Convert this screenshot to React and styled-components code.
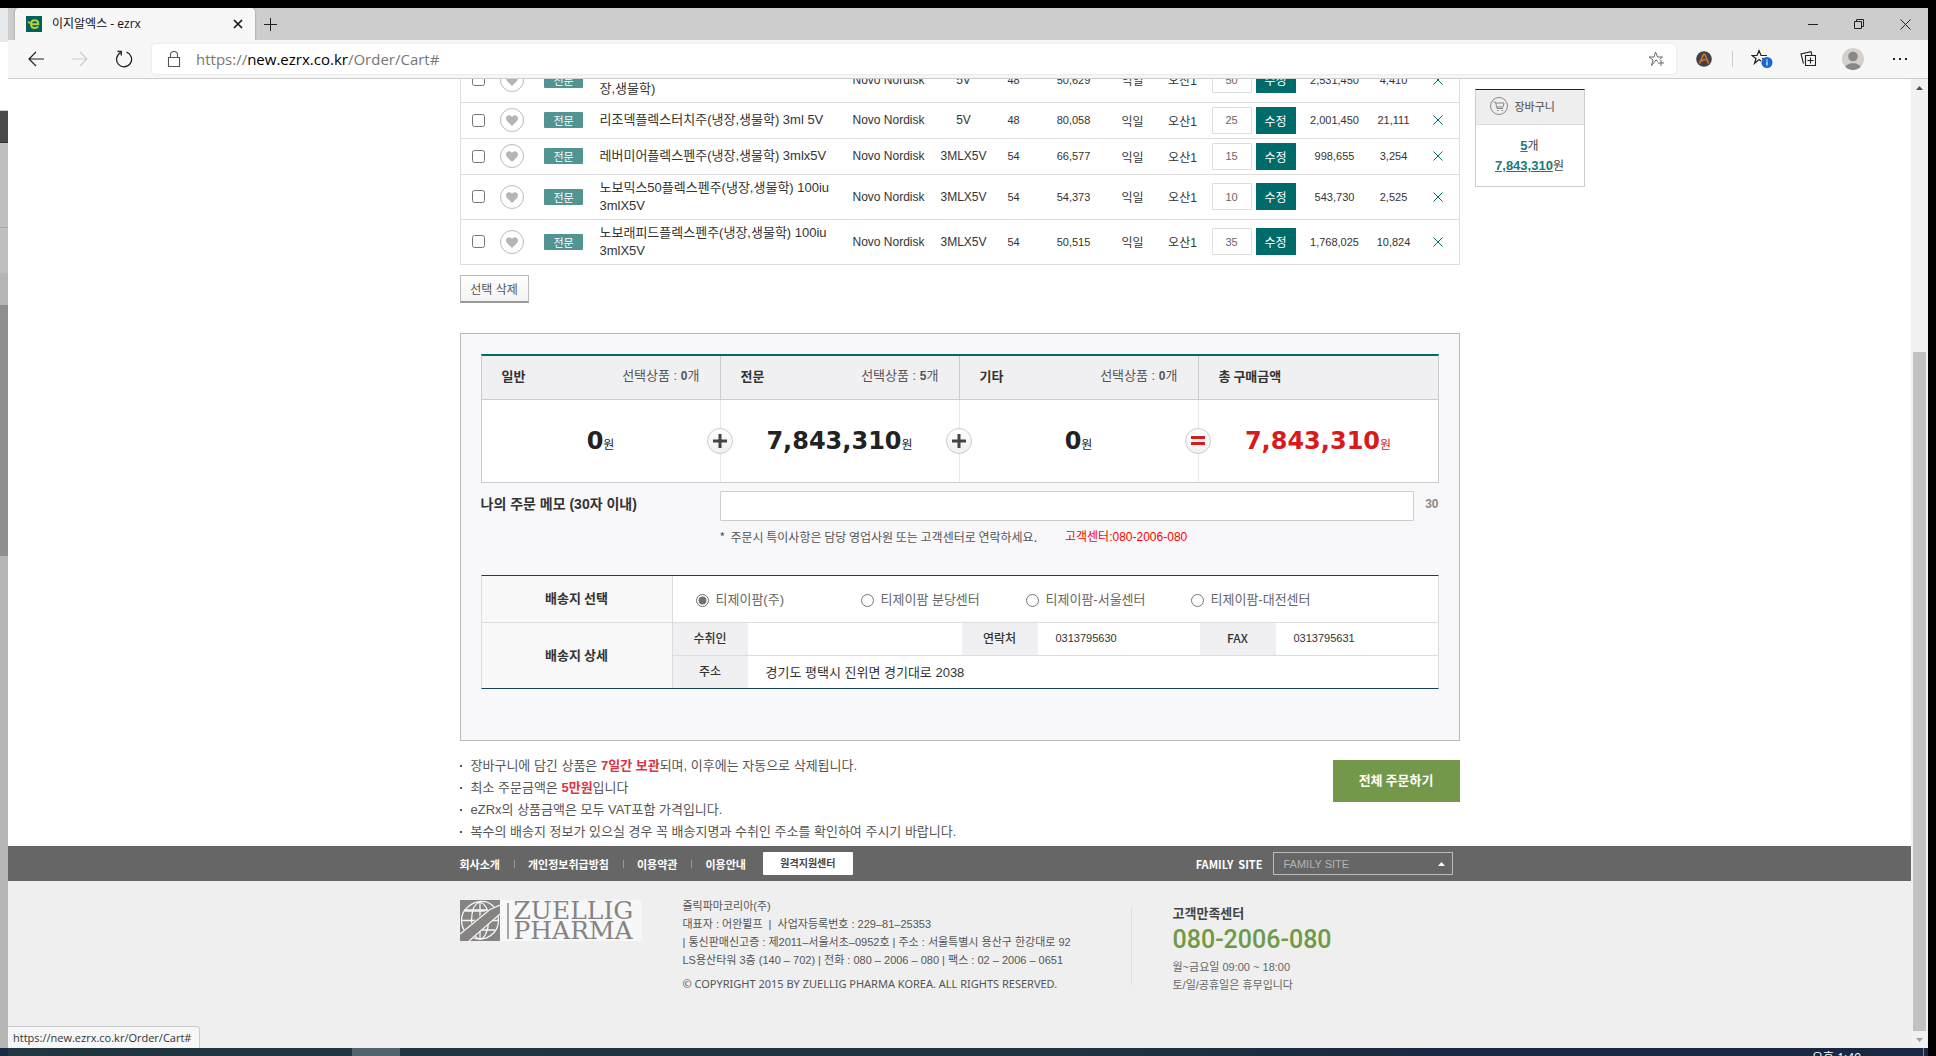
import React from 'react';
import styled, { createGlobalStyle, css } from 'styled-components';

const TEAL = '#006b6b';
const UI_FONT = '"Liberation Sans", "Noto Sans CJK KR", sans-serif';
const KR_FONT = '"Noto Sans CJK KR", "Liberation Sans", sans-serif';
const CHROME_FONT = '"Open Sans", "Noto Sans CJK KR", sans-serif';

const Global = createGlobalStyle`
  *, *::before, *::after { box-sizing: border-box; }
  body { margin: 0; background: #000; font-family: ${UI_FONT}; font-size: 12px; color: #333; }
  button, input, select { font-family: inherit; margin: 0; }
  table { border-collapse: separate; border-spacing: 0; }
  ul { list-style: none; margin: 0; padding: 0; }
  p { margin: 0; }
  a { color: inherit; text-decoration: none; }
  svg { display: block; flex: none; }
`;

/* ---------- desktop ---------- */

const Desktop = styled.div`
  display: flex;
  flex-direction: column;
  height: 100vh;
  padding-top: 8px;
  overflow: hidden;
`;

const Workspace = styled.div`
  display: flex;
  flex: 1;
  min-height: 0;
  padding-right: 8px;
`;

const BackWindow = styled.div`
  display: flex;
  flex-direction: column;
  width: 8px;
  flex: none;
`;

const Strip = styled.div`
  height: ${(p) => (p.$h ? `${p.$h}px` : 'auto')};
  flex: ${(p) => (p.$h ? 'none' : '1')};
  background: ${(p) => p.$bg};
`;

const Taskbar = styled.div`
  display: flex;
  height: 8px;
  flex: none;
  overflow: hidden;
  background: linear-gradient(90deg, #1c2848 0 8px, #21363f 8px, #20333f 55%, #1a2742 75%);
  border-right: 8px solid #000;
`;

const TaskButton = styled.div`
  width: 48px;
  margin-left: 352px;
  background: #52636b;
`;

const Clock = styled.time`
  margin-left: auto;
  margin-right: 4px;
  padding: 3px 62px 0 0;
  border-right: 1px solid #7b8494;
  font: 12px/14px ${CHROME_FONT};
  color: #fff;
`;

/* ---------- browser chrome ---------- */

const Browser = styled.div`
  position: relative;
  display: flex;
  flex-direction: column;
  flex: 1;
  min-width: 0;
  background: #fff;
`;

const TabStrip = styled.div`
  display: flex;
  align-items: center;
  height: 32px;
  flex: none;
  padding-left: 7px;
  background: #cdcdcd;
`;

const Tab = styled.div`
  display: flex;
  align-items: center;
  gap: 10px;
  width: 240px;
  height: 32px;
  padding: 0 12px 0 11px;
  border-radius: 4px 4px 0 0;
  background: #f7f7f7;
  box-shadow: 0 0 2px rgba(0, 0, 0, 0.4);
  font: 12px/16px ${CHROME_FONT};
  color: #111;
`;

const TabTitle = styled.span`
  flex: 1;
`;

const IconButton = styled.button`
  display: flex;
  align-items: center;
  justify-content: center;
  width: ${(p) => p.$w || 24}px;
  height: 24px;
  padding: 0;
  border: 0;
  background: none;
  color: ${(p) => p.$color || '#222'};
`;

const WindowButtons = styled.div`
  display: flex;
  margin-left: auto;
`;

const Toolbar = styled.div`
  position: relative;
  display: flex;
  align-items: center;
  height: 39px;
  flex: none;
  padding: 0 5px 1px 7px;
  background: #f7f7f7;
  border-bottom: 1px solid #ccc;
`;

const NavButtons = styled.div`
  display: flex;
  gap: 2px;
  margin-right: 7px;
`;

const AddressBar = styled.label`
  display: flex;
  align-items: center;
  flex: 1;
  height: 30px;
  margin-right: 4px;
  padding: 0 8px 0 14px;
  border-radius: 4px;
  background: #fff;
  box-shadow: 0 0 3px rgba(0, 0, 0, 0.1);
  color: #555;
`;

const Url = styled.span`
  flex: 1;
  margin-left: 14px;
  font: 15px/20px ${CHROME_FONT};
  color: #777;
  b { font-weight: 400; color: #000; }
`;

const ToolDivider = styled.span`
  width: 1px;
  height: 16px;
  margin: 0 4px;
  background: #ccc;
`;

const StatusBubble = styled.div`
  position: absolute;
  left: 0;
  bottom: 0;
  height: 22px;
  padding: 0 8px 0 5px;
  border: 1px solid #ccc;
  border-width: 1px 1px 0 0;
  border-radius: 0 4px 0 0;
  background: #f7f7f7;
  font: 11px/22px ${CHROME_FONT};
  color: #333;
`;

const Viewport = styled.div`
  display: flex;
  flex: 1;
  min-height: 0;
`;

const Scrollbar = styled.div`
  display: flex;
  flex-direction: column;
  width: 17px;
  flex: none;
  padding: 0 2px;
  background: #f1f1f1;
`;

const ScrollArrow = styled.div`
  display: flex;
  align-items: center;
  justify-content: center;
  height: 17px;
  color: ${(p) => p.$color};
`;

const Track = styled.div`
  display: grid;
  grid-template-rows: 256fr 679fr;
  flex: 1;
`;

const Thumb = styled.div`
  grid-row: 2;
  background: #c1c1c1;
`;

/* ---------- page ---------- */

const Page = styled.div`
  display: flex;
  flex-direction: column;
  flex: 1;
  min-width: 0;
  overflow: hidden;
`;

/* The page is scrolled, so the first cart row sits partly above the viewport. */
const Main = styled.main`
  display: grid;
  grid-template-columns: 1fr minmax(0, 1000px) 1fr;
  margin-top: -21px;
  padding-bottom: 3px;
`;

const Content = styled.div`
  grid-column: 2;
`;

const CartTable = styled.table`
  width: 100%;
  table-layout: fixed;
  border: 1px solid #ddd;
  border-width: 0 1px;
  td {
    padding: 0 0 1px;
    border-bottom: 1px solid #ddd;
    text-align: center;
  }
`;

const CartRow = styled.tr`
  && td { height: ${(p) => (p.$tall ? 45 : 36)}px; }
`;

const NameCell = styled.td`
  && { text-align: left; }
  font-size: 13px;
  line-height: 18px;
`;

const NumCell = styled.td`
  font-size: 11px;
`;

const Check = styled.input`
  display: block;
  width: 13px;
  height: 13px;
  margin: 0 auto;
`;

const HeartButton = styled.button`
  display: flex;
  align-items: center;
  justify-content: center;
  width: 24px;
  height: 24px;
  margin: 0 auto;
  padding: 1px 0 0;
  border: 1px solid #bbb;
  border-radius: 50%;
  background: #fff;
  color: #b5b5b5;
`;

const Badge = styled.span`
  display: block;
  width: 39px;
  margin: 0 auto;
  border-radius: 1px;
  background: #519492;
  font: 11px/16px ${KR_FONT};
  color: #fff;
`;

const QtyBox = styled.div`
  display: flex;
  gap: 4px;
`;

const QtyInput = styled.input`
  width: 40px;
  height: 27px;
  padding: 0;
  border: 1px solid #ddd;
  border-radius: 1px;
  background: #fff;
  text-align: center;
  font-size: 11px;
  color: #666;
`;

const EditButton = styled.button`
  width: 40px;
  height: 27px;
  padding: 0;
  border: 0;
  background: ${TEAL};
  font-size: 12px;
  color: #fff;
`;

const DeleteSelected = styled.button`
  display: block;
  width: 69px;
  height: 28px;
  margin: 10px 0 30px;
  padding: 0 0 1px;
  border: 1px solid #bbb;
  border-bottom: 2px solid #999;
  background: linear-gradient(#fff, #f3f3f3);
  font-size: 12px;
  color: #555;
`;

const Panel = styled.section`
  padding: 20px 20px 51px;
  border: 1px solid #bbb;
  background: #f8f8fa;
`;

const SummaryTable = styled.table`
  width: 100%;
  table-layout: fixed;
  border: 1px solid #ccc;
  border-top: 2px solid ${TEAL};
`;

const SummaryHead = styled.th`
  height: 44px;
  padding: 0 20px 3px;
  border-bottom: 1px solid #ccc;
  border-right: 1px solid #ccc;
  background: #f0f0f2;
  &:last-child { border-right: 0; }
`;

const SummaryHeadInner = styled.div`
  display: flex;
  justify-content: space-between;
  align-items: center;
  font: 700 13px/20px ${KR_FONT};
  color: #333;
`;

const Picked = styled.span`
  font: 400 13px/20px ${UI_FONT};
  color: #555;
  b { font-size: 12px; }
`;

const AmountCell = styled.td`
  position: relative;
  height: 82px;
  padding: 0;
  border-right: 1px solid #e8e8e8;
  background: #fff;
  text-align: center;
  font-size: 12px;
  color: ${(p) => (p.$total ? '#d71a1a' : '#222')};
  &:last-child { border-right: 0; }
  strong {
    font-family: "DejaVu Sans", sans-serif;
    font-size: 24px;
    line-height: 30px;
  }
`;

const Operator = styled.span`
  position: absolute;
  top: 50%;
  right: 0;
  z-index: 1;
  display: flex;
  align-items: center;
  justify-content: center;
  width: 26px;
  height: 26px;
  margin: -13px -13px 0 0;
  border: 1px solid #ccc;
  border-radius: 50%;
  background: linear-gradient(#fff, #f0f0f0);
`;

const MemoRow = styled.div`
  display: grid;
  grid-template-columns: 239px 1fr 25px;
  align-items: center;
  margin-top: 8px;
`;

const MemoLabel = styled.label`
  padding-bottom: 4px;
  font-weight: 700;
  font-size: 14px;
  line-height: 20px;
`;

const MemoInput = styled.input`
  width: 100%;
  height: 30px;
  border: 1px solid #ccc;
  border-radius: 1px;
  background: #fff;
`;

const MemoCount = styled.span`
  padding-bottom: 4px;
  text-align: right;
  font-weight: 700;
  color: #888;
`;

const MemoNote = styled.p`
  display: flex;
  gap: 28px;
  margin: 6px 0 28px;
  padding-left: 239px;
  font: 12px/20px ${KR_FONT};
  color: #555;
  em { font: 12px/20px ${UI_FONT}; color: #f00; }
`;

const ShipTable = styled.table`
  width: 100%;
  table-layout: fixed;
  border: 1px solid #ddd;
  border-top-color: #0f4357;
  border-bottom-color: #0f4357;
  background: #fff;
`;

const ShipHead = styled.th`
  height: ${(p) => (p.$h ? `${p.$h}px` : 'auto')};
  padding: 0 0 2px;
  border-right: 1px solid #ddd;
  border-bottom: ${(p) => (p.$last ? 0 : '1px solid #ddd')};
  background: #f8f8f8;
  font: 700 13px/20px ${KR_FONT};
`;

const ShipSubHead = styled.th`
  height: ${(p) => (p.$last ? 32 : 33)}px;
  padding: 0 0 2px;
  border-bottom: ${(p) => (p.$last ? 0 : '1px solid #ddd')};
  background: #f0f0f2;
  font: 500 12px/20px ${KR_FONT};
`;

const ShipCell = styled.td`
  padding: 0 18px 2px;
  border-bottom: ${(p) => (p.$last ? 0 : '1px solid #ddd')};
  font-size: ${(p) => (p.$num ? 11 : 13)}px;
`;

const RadioCell = styled.td`
  padding: 2px 0 0 23px;
  border-bottom: 1px solid #ddd;
`;

const RadioGroup = styled.div`
  display: grid;
  grid-template-columns: repeat(4, 165px);
`;

const RadioLabel = styled.label`
  display: flex;
  align-items: center;
  gap: 7px;
  font-size: 13px;
  line-height: 20px;
  color: #666;
  input { width: 13px; height: 13px; accent-color: #707070; }
`;

const AfterPanel = styled.div`
  display: flex;
  justify-content: space-between;
  align-items: flex-start;
  padding-top: 14px;
`;

const Hints = styled.ul`
  font-size: 13px;
  line-height: 22px;
  color: #555;
  li { display: flex; align-items: center; white-space: pre; }
  li::before { content: ''; width: 2px; height: 2px; margin-right: 9px; background: #555; }
  b { color: #dd3344; }
`;

const OrderButton = styled.button`
  width: 127px;
  height: 42px;
  margin-top: 5px;
  padding: 0 0 2px;
  border: 0;
  background: #739849;
  font: 700 13px/20px ${KR_FONT};
  color: #fff;
`;

const QuickCart = styled.aside`
  width: 110px;
  height: 98px;
  margin: 31px 0 0 15px;
  border: 1px solid #ccc;
  border-top-color: #222;
  background: #fff;
`;

const QuickCartTitle = styled.h2`
  display: flex;
  align-items: center;
  gap: 7px;
  height: 35px;
  margin: 0;
  padding: 0 0 2px 14px;
  border-bottom: 1px solid #ddd;
  background: #eee;
  font: 500 11px/20px ${KR_FONT};
  color: #666;
  svg { color: #888; }
`;

const QuickCartBody = styled.p`
  padding-top: 11px;
  text-align: center;
  line-height: 19px;
  color: #444;
  a { font-weight: 700; font-size: 13px; color: #1a7a7a; text-decoration: underline; }
`;

/* ---------- footer ---------- */

const FooterBand = styled.div`
  display: grid;
  grid-template-columns: 1fr minmax(0, 1000px) 1fr;
  ${(p) =>
    p.$dark
      ? css`height: 35px; flex: none; background: #666; color: #fff;`
      : css`flex: 1; background: #efefef; color: #555;`}
`;

const FooterNav = styled.div`
  grid-column: 2;
  display: flex;
  align-items: center;
  padding-right: 7px;
  font: 700 11px/20px ${KR_FONT};
`;

const FooterLinks = styled.nav`
  display: flex;
  align-items: center;
  a + a { margin-left: 14px; padding-left: 14px; background: linear-gradient(#999, #999) no-repeat 0 center / 1px 8px; }
`;

const SupportButton = styled.button`
  width: 90px;
  height: 23px;
  margin: 0 auto 0 17px;
  padding: 0 0 1px;
  border: 0;
  border-radius: 1px;
  background: #fff;
  font: 700 10px/16px ${KR_FONT};
  color: #444;
`;

const FamilyLabel = styled.label`
  margin-right: 10px;
  white-space: pre;
`;

const SelectWrap = styled.div`
  position: relative;
  width: 180px;
  svg { position: absolute; right: 8px; top: 10px; pointer-events: none; }
`;

const FamilySelect = styled.select`
  display: block;
  appearance: none;
  width: 100%;
  height: 23px;
  padding: 0 10px;
  border: 1px solid #bbb;
  border-radius: 0;
  background: #666;
  font-family: ${UI_FONT};
  font-size: 11px;
  color: #b5b5b5;
`;

const FooterInfo = styled.div`
  grid-column: 2;
  display: flex;
  align-items: flex-start;
`;

const Logo = styled.div`
  display: flex;
  align-items: center;
  width: 182px;
  height: 41px;
  margin: 19px 41px 0 0;
  background: #f7f7f7;
  color: #868383;
`;

const LogoBar = styled.span`
  width: 2px;
  height: 36px;
  margin: 0 5px 0 7px;
  background: #a5a5a5;
`;

const LogoText = styled.span`
  font: 25px/20px "DejaVu Serif", serif;
`;

const Company = styled.address`
  width: 448px;
  padding-top: 16px;
  font: normal 11px/18px ${UI_FONT};
  white-space: pre;
`;

const Copyright = styled.p`
  margin-top: 6px;
  font: 11px/18px "Noto Sans", ${KR_FONT};
`;

const Support = styled.section`
  margin-top: 27px;
  padding-left: 41px;
  height: 77px;
  border-left: 1px solid #ddd;
  font-size: 11px;
  line-height: 18px;
  color: #666;
  h2 { margin: -5px 0 3px; font: 700 13px/20px ${KR_FONT}; color: #444; }
  strong { display: block; margin-bottom: 4px; font: 500 25px/28px Roboto, sans-serif; color: #6f9a45; }
`;

/* ---------- icons ---------- */

const Line = ({ w = 16, h = w, sw = 1, children }) => (
  <svg width={w} height={h} viewBox={`0 0 ${w} ${h}`} fill="none" stroke="currentColor" strokeWidth={sw}>
    {children}
  </svg>
);

const Heart = () => (
  <svg width="12" height="11" viewBox="0 0 12 11" fill="currentColor">
    <path d="M6 11 1 6C-1 3.500.300.300 3 .300 4.500.300 5.500 1 6 2 6.500 1 7.500.300 9 .300 11.700.300 13 3.500 11 6Z" />
  </svg>
);

const Triangle = ({ down, w = 7 }) => (
  <svg width={w} height="4" viewBox="0 0 7 4" fill="currentColor">
    <path d={down ? 'M0 0H7L3.500 4Z' : 'M0 4H7L3.500 0Z'} />
  </svg>
);

const GlobeMark = () => (
  <svg width="40" height="41" viewBox="0 0 40 41">
    <rect width="40" height="41" fill="#868383" />
    <g fill="none" stroke="#f7f7f7" strokeWidth="1.300">
      <circle cx="20" cy="20.500" r="18.500" />
      <ellipse cx="20" cy="20.500" rx="8.500" ry="18.500" />
      <path d="M20 2V39M2 20.500H38M5 11H35M5 30H35" />
    </g>
    <path d="M40 2V14L10 41H0V33L28 9H5V0H40Z" fill="#868383" />
    <path d="M40 5 30 9.500 0 34M40 14 9 41" fill="none" stroke="#f7f7f7" strokeWidth="1.200" />
    <path d="M4 11.500C12 -1 27 -1 34 7M20 2V9M13 9C15 5 17 3 20 2 23 3 25 5 27 9M6 10H28" fill="none" stroke="#f7f7f7" strokeWidth="1.300" />
  </svg>
);

const Plus = () => (
  <svg width="14" height="14" viewBox="0 0 14 14" fill="#444">
    <path d="M5.500 0h3v5.500H14v3H8.500V14h-3V8.500H0v-3h5.500z" />
  </svg>
);

const Equals = () => (
  <svg width="14" height="10" viewBox="0 0 14 10" fill="#d71a1a">
    <path d="M0 0h14v3H0zM0 6h14v3H0z" />
  </svg>
);

/* ---------- data ---------- */

const columns = [35, 32, 72, 242, 94, 56, 44, 76, 42, 58, 88, 70, 48, 41];

const items = [
  { name: ['트레시바플렉스터치주 3ml 5V(냉', '장,생물학)'], size: '5V', code: '48', price: '50,629', qty: 50, total: '2,531,450', point: '4,410' },
  { name: ['리조덱플렉스터치주(냉장,생물학) 3ml 5V'], size: '5V', code: '48', price: '80,058', qty: 25, total: '2,001,450', point: '21,111' },
  { name: ['레버미어플렉스펜주(냉장,생물학) 3mlx5V'], size: '3MLX5V', code: '54', price: '66,577', qty: 15, total: '998,655', point: '3,254' },
  { name: ['노보믹스50플렉스펜주(냉장,생물학) 100iu', '3mlX5V'], size: '3MLX5V', code: '54', price: '54,373', qty: 10, total: '543,730', point: '2,525' },
  { name: ['노보래피드플렉스펜주(냉장,생물학) 100iu', '3mlX5V'], size: '3MLX5V', code: '54', price: '50,515', qty: 35, total: '1,768,025', point: '10,824' },
];

const groups = [
  { title: '일반', picked: '0', amount: '0', sign: 'plus' },
  { title: '전문', picked: '5', amount: '7,843,310', sign: 'plus' },
  { title: '기타', picked: '0', amount: '0', sign: 'equals' },
  { title: '총 구매금액', amount: '7,843,310', total: true },
];

const branches = ['티제이팜(주)', '티제이팜 분당센터', '티제이팜-서울센터', '티제이팜-대전센터'];

/* ---------- sections ---------- */

function Chrome() {
  return (
    <>
      <TabStrip>
        <Tab>
          <svg width="16" height="16" viewBox="0 0 16 16">
            <rect width="16" height="16" fill="#005f5f" />
            <path d="M5 8.300H12.300C12.300 5.500 10.700 4.300 8.700 4.300 6.300 4.300 5 6 5 8.300 5 10.800 6.500 12 8.700 12 10.300 12 11.500 11.500 12.300 10.500" fill="none" stroke="#b8d432" strokeWidth="2" />
            <path d="M2 5.500C3 7 4 7.300 5.500 7" fill="none" stroke="#b8d432" strokeWidth="1.500" />
          </svg>
          <TabTitle>이지알엑스 - ezrx</TabTitle>
          <Line w={10} sw={1.6}><path d="M1 1 9 9M9 1 1 9" /></Line>
        </Tab>
        <IconButton $w={30} aria-label="새 탭"><Line w={13}><path d="M6.500 0V13M0 6.500H13" /></Line></IconButton>
        <WindowButtons>
          <IconButton $w={46} aria-label="최소화"><Line w={10}><path d="M0 5.500H10" /></Line></IconButton>
          <IconButton $w={46} aria-label="복원"><Line w={10}><path d="M.5 2.500H7.500V9.500H.5ZM2.500 2.500V.5H9.500V7.500H7.500" /></Line></IconButton>
          <IconButton $w={46} aria-label="닫기"><Line w={11}><path d="M.5.5 10.500 10.500M10.500.5.5 10.500" /></Line></IconButton>
        </WindowButtons>
      </TabStrip>
      <Toolbar>
        <NavButtons>
          <IconButton $w={42} aria-label="뒤로"><Line w={16} sw={1.2}><path d="M16 8H1M8 1 1 8 8 15" /></Line></IconButton>
          <IconButton $w={42} $color="#ccc" aria-label="앞으로"><Line w={16} sw={1.2}><path d="M0 8H15M8 1 15 8 8 15" /></Line></IconButton>
          <IconButton $w={42} aria-label="새로 고침"><Line w={18} sw={1.3}><path d="M11.500 2.200A7.500 7.500 0 1 1 5.500 2.700M2.500 1.500H6.300V5.500" /></Line></IconButton>
        </NavButtons>
        <AddressBar>
          <Line w={16} sw={1.1}><path d="M2.500 6.500H13.500V15.500H2.500ZM4.500 6.500V4A3.500 3.500 0 0 1 11.500 4V6.500" /></Line>
          <Url>https://<b>new.ezrx.co.kr</b>/Order/Cart#</Url>
          <IconButton $color="#666" aria-label="즐겨찾기에 추가">
            <Line w={16}><path d="M10 10.500 8 9 3.500 14.500 5 9 1 6H6L7.500 1 9.500 6H14.500L11.500 8.500M13 9V15M10 12H16" /></Line>
          </IconButton>
        </AddressBar>
        <IconButton $w={48} aria-label="확장">
          <svg width="16" height="16" viewBox="0 0 16 16">
            <circle cx="8" cy="8" r="7.800" fill="#43404a" />
            <path d="M3.500 12.500 7.500 3.500 9 3.500 12.500 12.500M4.500 10 9.500 8.500" fill="none" stroke="#d9772a" strokeWidth="1.600" />
          </svg>
        </IconButton>
        <ToolDivider />
        <IconButton $w={50} aria-label="즐겨찾기">
          <Line w={22} h={20} sw={1.2}>
            <path d="M10 12 8 10.500 3.500 14.500 5 9.500 1 6.500H6L8 1.500 10 6.500H16M11 9.500H15" />
            <circle cx="16" cy="13.500" r="5.500" fill="#1967d2" stroke="none" />
            <path d="M16 12.500V16.500M16 10.500V11.700" stroke="#fff" />
          </Line>
        </IconButton>
        <IconButton $w={42} aria-label="컬렉션">
          <Line w={16} sw={1.1}><path d="M5.500 4.500H15.500V14.500H5.500ZM10.500 6.500V12.500M7.500 9.500H13.500M3.500 12.500 1 3 11 .700 12 4.500" /></Line>
        </IconButton>
        <IconButton $w={48} aria-label="프로필">
          <svg width="22" height="22" viewBox="0 0 22 22">
            <circle cx="11" cy="11" r="11" fill="#d4d0cc" />
            <circle cx="11" cy="8.500" r="4.800" fill="#8a8784" />
            <path d="M3.500 19C5 14 17 14 18.500 19 14 23 8 23 3.500 19Z" fill="#8a8784" />
          </svg>
        </IconButton>
        <IconButton $w={46} aria-label="설정">
          <svg width="14" height="2" viewBox="0 0 14 2"><path d="M0 0h2v2H0zM6 0h2v2H6zM12 0h2v2h-2z" fill="#222" /></svg>
        </IconButton>
      </Toolbar>
    </>
  );
}

function Cart() {
  return (
    <CartTable>
      <colgroup>{columns.map((w, i) => <col key={i} width={w} />)}</colgroup>
      <tbody>
        {items.map((it, i) => (
          <CartRow key={i} $tall={it.name.length > 1}>
            <td><Check type="checkbox" aria-label={it.name.join(' ')} /></td>
            <td><HeartButton aria-label="관심상품"><Heart /></HeartButton></td>
            <td><Badge>전문</Badge></td>
            <NameCell>{it.name.map((line, n) => <div key={n}>{line}</div>)}</NameCell>
            <td>Novo Nordisk</td>
            <td>{it.size}</td>
            <NumCell>{it.code}</NumCell>
            <NumCell>{it.price}</NumCell>
            <td>익일</td>
            <td>오산1</td>
            <td>
              <QtyBox>
                <QtyInput defaultValue={it.qty} aria-label="수량" />
                <EditButton>수정</EditButton>
              </QtyBox>
            </td>
            <NumCell>{it.total}</NumCell>
            <NumCell>{it.point}</NumCell>
            <td>
              <IconButton $w={41} $color={TEAL} aria-label="삭제"><Line w={10}><path d="M.5.5 9.500 9.500M9.500.5.5 9.500" /></Line></IconButton>
            </td>
          </CartRow>
        ))}
      </tbody>
    </CartTable>
  );
}

function OrderPanel() {
  return (
    <Panel>
      <SummaryTable>
        <thead>
          <tr>
            {groups.map((g) => (
              <SummaryHead key={g.title}>
                <SummaryHeadInner>
                  {g.title}
                  {g.picked && <Picked>선택상품 : <b>{g.picked}</b>개</Picked>}
                </SummaryHeadInner>
              </SummaryHead>
            ))}
          </tr>
        </thead>
        <tbody>
          <tr>
            {groups.map((g) => (
              <AmountCell key={g.title} $total={g.total}>
                <strong>{g.amount}</strong>원
                {g.sign && <Operator>{g.sign === 'plus' ? <Plus /> : <Equals />}</Operator>}
              </AmountCell>
            ))}
          </tr>
        </tbody>
      </SummaryTable>
      <MemoRow>
        <MemoLabel htmlFor="memo">나의 주문 메모 (30자 이내)</MemoLabel>
        <MemoInput id="memo" maxLength={30} />
        <MemoCount>30</MemoCount>
      </MemoRow>
      <MemoNote>
        <span>*&nbsp; 주문시 특이사항은 담당 영업사원 또는 고객센터로 연락하세요.</span>
        <em>고객센터:080-2006-080</em>
      </MemoNote>
      <ShipTable>
        <colgroup>{[191, 75, 214, 76, 162, 76, 162].map((w, i) => <col key={i} width={w} />)}</colgroup>
        <tbody>
          <tr>
            <ShipHead $h={47}>배송지 선택</ShipHead>
            <RadioCell colSpan={6}>
              <RadioGroup>
                {branches.map((b, i) => (
                  <RadioLabel key={b}><input type="radio" name="branch" defaultChecked={i === 0} />{b}</RadioLabel>
                ))}
              </RadioGroup>
            </RadioCell>
          </tr>
          <tr>
            <ShipHead rowSpan={2} $last>배송지 상세</ShipHead>
            <ShipSubHead>수취인</ShipSubHead>
            <ShipCell />
            <ShipSubHead>연락처</ShipSubHead>
            <ShipCell $num>0313795630</ShipCell>
            <ShipSubHead>FAX</ShipSubHead>
            <ShipCell $num>0313795631</ShipCell>
          </tr>
          <tr>
            <ShipSubHead $last>주소</ShipSubHead>
            <ShipCell $last colSpan={5}>경기도 평택시 진위면 경기대로 2038</ShipCell>
          </tr>
        </tbody>
      </ShipTable>
    </Panel>
  );
}

function Footer() {
  return (
    <>
      <FooterBand $dark>
        <FooterNav>
          <FooterLinks>
            <a href="#about">회사소개</a>
            <a href="#privacy">개인정보취급방침</a>
            <a href="#terms">이용약관</a>
            <a href="#guide">이용안내</a>
          </FooterLinks>
          <SupportButton>원격지원센터</SupportButton>
          <FamilyLabel htmlFor="family">FAMILY  SITE</FamilyLabel>
          <SelectWrap>
            <FamilySelect id="family"><option>FAMILY SITE</option></FamilySelect>
            <Triangle />
          </SelectWrap>
        </FooterNav>
      </FooterBand>
      <FooterBand as="footer">
        <FooterInfo>
          <Logo>
            <GlobeMark />
            <LogoBar />
            <LogoText>ZUELLIG<br />PHARMA</LogoText>
          </Logo>
          <Company>
            <p>쥴릭파마코리아(주)</p>
            <p>대표자 : 어완뷜프  |  사업자등록번호 : 229–81–25353</p>
            <p>| 통신판매신고증 : 제2011–서울서초–0952호 | 주소 : 서울특별시 용산구 한강대로 92</p>
            <p>LS용산타워 3층 (140 – 702) | 전화 : 080 – 2006 – 080 | 팩스 : 02 – 2006 – 0651</p>
            <Copyright>© COPYRIGHT 2015 BY ZUELLIG PHARMA KOREA. ALL RIGHTS RESERVED.</Copyright>
          </Company>
          <Support>
            <h2>고객만족센터</h2>
            <strong>080-2006-080</strong>
            <p>월~금요일 09:00 ~ 18:00</p>
            <p>토/일/공휴일은 휴무입니다</p>
          </Support>
        </FooterInfo>
      </FooterBand>
    </>
  );
}

export default function App() {
  return (
    <Desktop>
      <Global />
      <Workspace>
        <BackWindow>
          <Strip $h={34} $bg="#e6eaed" />
          <Strip $h={68} $bg="#fff" />
          <Strip $h={1} $bg="#ccc" />
          <Strip $h={31} $bg="#4a4a4a" />
          <Strip $h={1} $bg="#333" />
          <Strip $h={84} $bg="#bfbfbf" />
          <Strip $h={1} $bg="#a9a9a9" />
          <Strip $h={45} $bg="#bfbfbf" />
          <Strip $h={32} $bg="#b5b5b5" />
          <Strip $h={251} $bg="#8f8f8f" />
          <Strip $bg="#b5b5b5" />
        </BackWindow>
        <Browser>
          <Chrome />
          <Viewport>
            <Page>
              <Main>
                <Content>
                  <Cart />
                  <DeleteSelected>선택 삭제</DeleteSelected>
                  <OrderPanel />
                  <AfterPanel>
                    <Hints>
                      <li>장바구니에 담긴 상품은 <b>7일간 보관</b>되며, 이후에는 자동으로 삭제됩니다.</li>
                      <li>최소 주문금액은 <b>5만원</b>입니다</li>
                      <li>eZRx의 상품금액은 모두 VAT포함 가격입니다.</li>
                      <li>복수의 배송지 정보가 있으실 경우 꼭 배송지명과 수취인 주소를 확인하여 주시기 바랍니다.</li>
                    </Hints>
                    <OrderButton>전체 주문하기</OrderButton>
                  </AfterPanel>
                </Content>
                <QuickCart>
                  <QuickCartTitle>
                    <Line w={18}>
                      <circle cx="9" cy="9" r="8.500" />
                      <path d="M3.500 5H5.500L7 11.500H13M6 6H14L13 10H7M7 13.500H8.500M11.500 13.500H13" />
                    </Line>
                    장바구니
                  </QuickCartTitle>
                  <QuickCartBody>
                    <a href="#cart">5</a>개<br />
                    <a href="#cart">7,843,310</a>원
                  </QuickCartBody>
                </QuickCart>
              </Main>
              <Footer />
            </Page>
            <Scrollbar>
              <ScrollArrow $color="#505050"><Triangle /></ScrollArrow>
              <Track><Thumb /></Track>
              <ScrollArrow $color="#a0a0a0"><Triangle down /></ScrollArrow>
            </Scrollbar>
          </Viewport>
          <StatusBubble>https://new.ezrx.co.kr/Order/Cart#</StatusBubble>
        </Browser>
      </Workspace>
      <Taskbar>
        <TaskButton />
        <Clock>오후 1:49</Clock>
      </Taskbar>
    </Desktop>
  );
}
